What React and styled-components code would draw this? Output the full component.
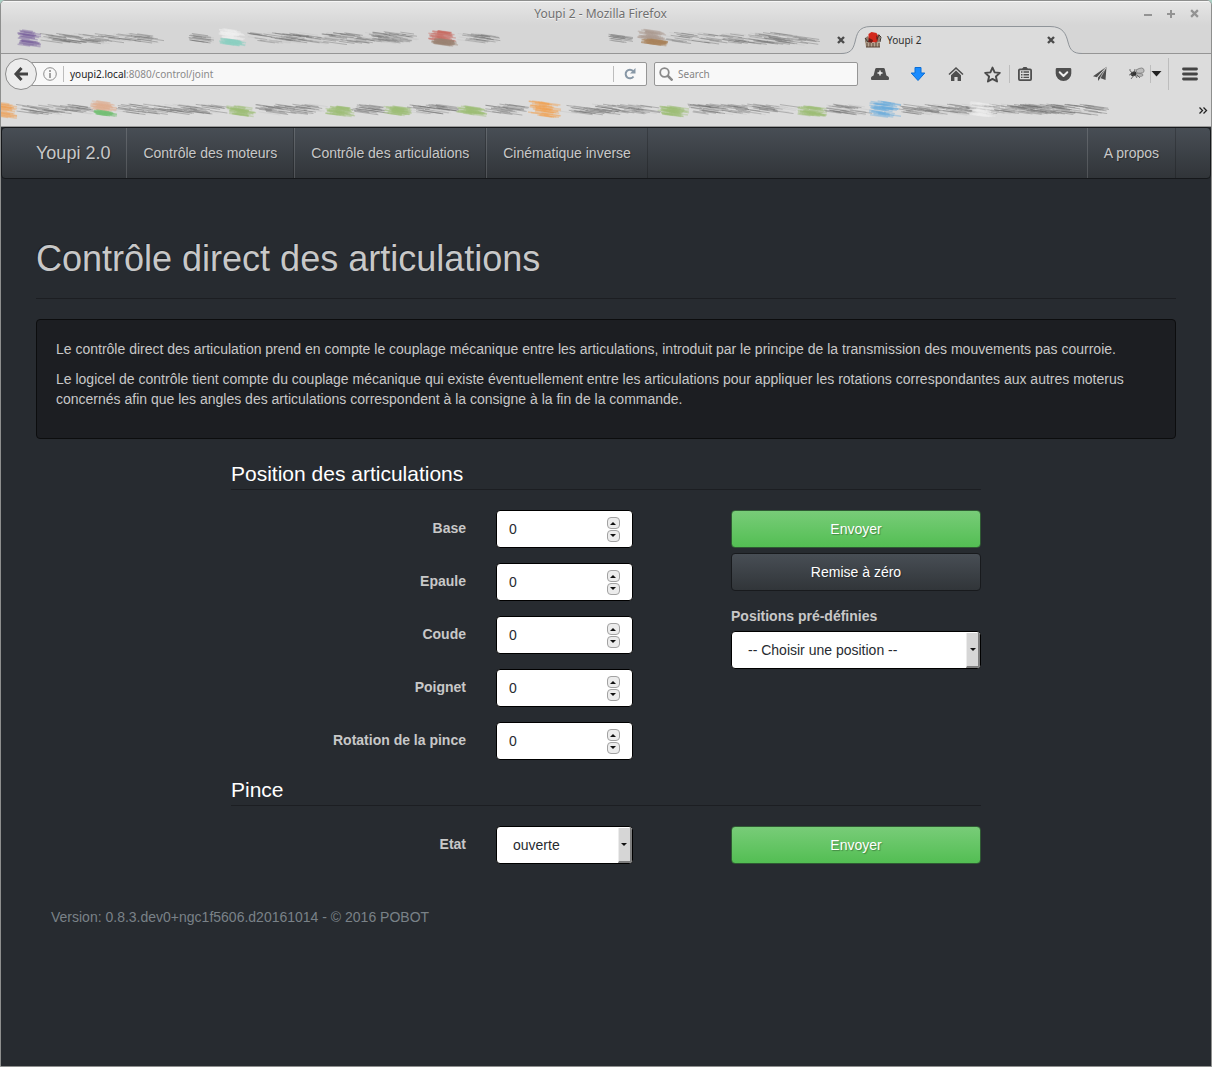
import React from "react";
import styled, { createGlobalStyle, css } from "styled-components";

const uiFont = `"Noto Sans", "Open Sans", sans-serif`;
const pageFont = `"Liberation Sans", Arial, sans-serif`;

const GlobalStyle = createGlobalStyle`
  *, *::before, *::after { box-sizing: border-box; }
  body { margin: 0; background: #a9cfc3; }
  button, input, select { font: inherit; margin: 0; }
  svg { display: block; flex: none; }
`;

/* ---------- browser window ---------- */

const Window = styled.div`
  display: flex;
  flex-direction: column;
  min-height: 100vh;
  border: 1px solid #8e8f8e;
  border-radius: 5px 5px 0 0;
  background: #dcdcdc;
  overflow: hidden;
  font-family: ${uiFont};
`;

const TopArea = styled.div`
  background: linear-gradient(#e6e6e6, #d6d6d6 24px, #d6d6d6);
  box-shadow: inset 0 1px 0 #f6f6f6;
`;

const TitleBar = styled.div`
  display: grid;
  grid-template-columns: 1fr auto 1fr;
  align-items: center;
  height: 24px;
  padding: 1px 11px 0 0;
  font-size: 12px;
  line-height: 16px;
  color: #6f6f6f;
  text-shadow: 0 1px 0 #f4f4f4;
`;

const WindowButtons = styled.div`
  grid-column: 3;
  display: flex;
  justify-content: flex-end;
  gap: 11px;
`;

const TitleText = styled.span`
  grid-column: 2;
`;

const IconButton = styled.button`
  display: flex;
  align-items: center;
  justify-content: center;
  flex: none;
  width: ${(p) => p.$w || 12}px;
  padding: 0;
  border: 0;
  background: none;
  color: ${(p) => p.$color || "#4c4c4c"};
`;

const TabStrip = styled.div`
  display: flex;
  align-items: stretch;
  height: 29px;
  box-shadow: inset 0 -1px 0 #959595;
`;

const ActiveTab = styled.div`
  position: relative;
  display: flex;
  align-items: center;
  width: 238px;
  padding: 0 28px 0 17px;
  color: #2e2e2e;
  font-size: 10px;
  line-height: 16px;
`;

const TabShape = styled.svg`
  position: absolute;
  inset: 0;
  overflow: visible;
`;

const TabLabel = styled.span`
  position: relative;
  flex: 1;
  padding-left: 5px;
`;

const Over = styled.span`
  position: relative;
`;

const Toolbar = styled.div`
  display: flex;
  align-items: center;
  height: 40px;
  padding-left: 4px;
`;

const BackButton = styled.button`
  position: relative;
  z-index: 1;
  display: flex;
  align-items: center;
  justify-content: center;
  flex: none;
  width: 32px;
  height: 32px;
  padding: 0;
  border: 1px solid #8c8c8c;
  border-radius: 50%;
  background: #ececec;
`;

const fieldBox = css`
  display: flex;
  align-items: center;
  height: 24px;
  border: 1px solid #969696;
  background: #f8f8f8;
  font-size: 10px;
  line-height: 16px;
`;

const UrlBar = styled.div`
  ${fieldBox}
  flex: 1;
  gap: 6px;
  margin-left: -6px;
  padding-left: 11px;
  border-radius: 0 2px 2px 0;
  color: #8a8a8a;
`;

const UrlText = styled.div`
  flex: 1;
  b { font-weight: 400; color: #222; }
`;

const SearchBar = styled.label`
  ${fieldBox}
  flex: 0 0 204px;
  gap: 5px;
  margin: 0 3px 0 7px;
  padding-left: 4px;
  border-radius: 2px;
`;

const SearchInput = styled.input`
  flex: 1;
  min-width: 0;
  padding: 0;
  border: 0;
  outline: 0;
  background: none;
  &::placeholder { color: #858585; opacity: 1; }
`;

const Divider = styled.span`
  flex: none;
  width: 1px;
  height: ${(p) => p.$h || 16}px;
  background: #bdbdbd;
`;

const BookmarkBar = styled.div`
  display: flex;
  align-items: flex-start;
  justify-content: space-between;
  height: 33px;
  padding: 2px 2px 0 0;
  border-bottom: 1px solid #9a9a9a;
`;

/* ---------- web page ---------- */

const Page = styled.div`
  flex: 1;
  background: #272b30;
  color: #c8c8c8;
  font-family: ${pageFont};
  font-size: 14px;
  line-height: 20px;
`;

const Container = styled.div`
  max-width: 1170px;
  margin: 0 auto;
  padding: 0 15px;
`;

const Navbar = styled.nav`
  border: 1px solid #16181b;
  border-radius: 4px;
  background: linear-gradient(#484e55, #3a3f44 60%, #313539);
  text-shadow: 1px 1px 1px rgba(0, 0, 0, 0.3);
`;

const NavRow = styled(Container)`
  display: flex;
  height: 50px;
`;

const NavBrand = styled.a`
  padding: 15px 16px 15px 0;
  color: #c8c8c8;
  font-size: 18px;
  text-decoration: none;
`;

const NavLink = styled.a`
  padding: 15px 16px;
  border-left: 1px solid rgba(255, 255, 255, 0.15);
  border-right: 1px solid rgba(0, 0, 0, 0.2);
  color: #c8c8c8;
  text-decoration: none;
`;

const Spacer = styled.span`
  flex: 1;
`;

const Heading = styled.h1`
  margin: 59px 0 20px;
  padding-bottom: 18px;
  border-bottom: 1px solid #1c1e22;
  font-size: 36px;
  font-weight: 400;
  line-height: 42px;
  text-shadow: -1px -1px 0 rgba(0, 0, 0, 0.3);
`;

const Well = styled.div`
  margin-bottom: 20px;
  padding: 19px;
  border: 1px solid #0c0d0e;
  border-radius: 4px;
  background: #1c1e22;
  p { margin: 0 0 10px; }
`;

const Form = styled.form`
  width: 750px;
  max-width: 100%;
  margin: 0 auto;
`;

const Fieldset = styled.fieldset`
  min-width: 0;
  margin: 0;
  padding: 0;
  border: 0;
`;

const Legend = styled.legend`
  width: 100%;
  margin-bottom: 20px;
  padding: 0;
  border-bottom: 1px solid #1c1e22;
  color: #fff;
  font-size: 21px;
  line-height: 30px;
`;

const Columns = styled.div`
  display: grid;
  grid-template-columns: 2fr 1fr;
`;

const Group = styled.div`
  display: grid;
  grid-template-columns: 3fr 2fr 1fr;
  margin-bottom: 15px;
`;

const FieldLabel = styled.label`
  padding: 8px 15px 0 0;
  font-weight: 700;
  text-align: right;
`;

const FieldCell = styled.div`
  min-width: 0;
  padding: 0 15px;
`;

const NumberBox = styled.div`
  display: flex;
  align-items: center;
  height: 38px;
  padding: 0 12px;
  border: 1px solid #000;
  border-radius: 4px;
  background: #fff;
`;

const NumberInput = styled.input`
  flex: 1;
  width: 0;
  min-width: 0;
  padding: 0;
  border: 0;
  outline: 0;
  background: none;
  color: #272b30;
  appearance: textfield;
  &::-webkit-inner-spin-button { appearance: none; margin: 0; }
`;

const Spinner = styled.span`
  display: grid;
  gap: 1px;
`;

const SpinButton = styled.button`
  display: flex;
  align-items: center;
  justify-content: center;
  width: 13px;
  height: 12px;
  padding: 0;
  border: 1px solid #a2a2a2;
  border-radius: 4px;
  background: #ececec;
`;

const SelectBox = styled.div`
  display: flex;
  position: relative;
  height: 38px;
  border: 1px solid #000;
  border-radius: 4px;
  background: #fff;
  overflow: hidden;
`;

const Select = styled.select`
  flex: 1;
  min-width: 0;
  padding: 0 16px;
  border: 0;
  outline: 0;
  background: none;
  color: #272b30;
  appearance: none;
`;

const SelectArrow = styled.span`
  position: absolute;
  top: 1px;
  right: 0;
  bottom: 0;
  display: flex;
  align-items: center;
  justify-content: center;
  width: 14px;
  border: solid;
  border-width: 0 2px 2px 1px;
  border-color: #ececec #7d7d7d #7d7d7d #ececec;
  background: #d6d6d6;
  pointer-events: none;
`;

const Button = styled.button`
  display: block;
  width: 100%;
  height: 38px;
  margin-bottom: 5px;
  border: 1px solid ${(p) => (p.$primary ? "#2f5a33" : "#181a1d")};
  border-radius: 4px;
  background: ${(p) =>
    p.$primary
      ? "linear-gradient(#78cc78, #62c462 60%, #53be53)"
      : "linear-gradient(#484e55, #3a3f44 60%, #313539)"};
  color: #fff;
  text-shadow: 1px 1px 1px rgba(0, 0, 0, 0.3);
`;

const StackLabel = styled.label`
  display: block;
  margin: 15px 0 5px;
  font-weight: 700;
`;

const Footer = styled.footer`
  padding: 28px 15px;
  color: #7a8288;
`;

const SmearCanvas = styled.svg`
  filter: blur(0.6px);
`;

/* ---------- drawings ---------- */

const noise = (n) => {
  const v = Math.sin(n * 127.1 + 11.7) * 43758.5453;
  return v - Math.floor(v);
};

/* Each smear is [start, end, centre, spread, colour]. */
function Smears({ width, height, items }) {
  const lines = [];
  items.forEach(([from, to, mid, spread, color], k) => {
    const gray = !color;
    const len = gray ? 20 : 17;
    const count = Math.max(10, Math.round((to - from) * (gray ? 0.7 : 1.3)));
    for (let i = 0; i < count; i++) {
      const seed = k * 997 + i * 3;
      const x = from + noise(seed) * Math.max(2, to - from - len);
      const y = mid - 1 + (noise(seed + 1) - 0.5) * spread;
      const l = Math.min(to - x, len * (0.6 + noise(seed + 2) * 0.6));
      lines.push(
        <line
          key={`${k}-${i}`}
          x1={x}
          y1={y}
          x2={x + l}
          y2={y + l * 0.14}
          stroke={color || (i % 3 ? "#6c6c6c" : "#c4c4c4")}
          strokeWidth={gray ? 0.9 : 1.5}
          opacity={gray ? 0.45 : 0.4}
        />
      );
    }
  });
  return (
    <SmearCanvas width={width} height={height} aria-hidden="true">
      {lines}
    </SmearCanvas>
  );
}

const tabSmears = [
  [16, 40, 13, 15, "#79619c"],
  [37, 163, 13, 8],
  [187, 213, 13, 7],
  [217, 244, 9, 9, "#eeeeee"],
  [218, 245, 17, 5, "#8ccfc1"],
  [245, 400, 13, 9],
  [370, 423, 12, 9],
  [427, 455, 11, 9, "#c76b62"],
  [430, 457, 17, 5, "#9a8272"],
  [455, 500, 13, 8],
  [607, 632, 13, 7],
  [636, 665, 11, 11, "#ab9a90"],
  [640, 667, 17, 4, "#a9835c"],
  [663, 820, 13, 10],
];

const bookmarkSmears = [
  [-6, 16, 14, 14, "#eda057"],
  [14, 95, 13, 8],
  [88, 116, 10, 8, "#deae91"],
  [92, 116, 17, 4, "#76bf76"],
  [113, 230, 13, 8],
  [225, 255, 15, 8, "#9dbd76"],
  [252, 330, 13, 8],
  [324, 354, 15, 8, "#9dbd76"],
  [350, 388, 13, 8],
  [382, 411, 15, 8, "#9dbd76"],
  [405, 458, 13, 8],
  [455, 486, 15, 8, "#9dbd76"],
  [483, 528, 13, 8],
  [527, 560, 13, 15, "#f0a152"],
  [557, 660, 13, 8],
  [656, 688, 15, 8, "#9dbd76"],
  [686, 800, 13, 8],
  [796, 826, 15, 8, "#9dbd76"],
  [823, 872, 13, 8],
  [868, 900, 13, 14, "#67aadb"],
  [897, 1075, 13, 8],
  [968, 995, 13, 13, "#eeeeee"],
  [990, 1108, 13, 8],
];

const Cross = ({ size = 8, w = 2 }) => (
  <svg width={size} height={size} viewBox="0 0 8 8">
    <path d="M1 1l6 6M7 1L1 7" stroke="currentColor" strokeWidth={w} />
  </svg>
);

const Caret = ({ up }) => (
  <svg width="6" height="4" viewBox="0 0 6 4">
    <path d={up ? "M0 4L3 1l3 3z" : "M0 0h6L3 3z"} fill="#111" />
  </svg>
);

const RobotIcon = () => (
  <svg width="18" height="16" viewBox="0 0 18 16">
    <path d="M1 6l3-2 2 4-1 3H1zM12 5l2-3 2 1v6l-3 2z" fill="#8d7d6d" />
    <path d="M4.500 2l3-2 5 1 2 4-2 6-5-1-3-3z" fill="#d2281c" />
    <path d="M5 6l4 2-1 3-4-1zM12 3l2 3-1 4" fill="#6f1a14" />
    <path d="M1 6l3 4M13 7l2-4 2 2-1 5" stroke="#403832" fill="none" />
    <path d="M1 10l5 1 10-1v5H2z" fill="#b7a491" />
    <path d="M3 11v4M6 10v5M9 11v4M12 10v5M15 11v4M2 15h14" stroke="#5a4436" />
  </svg>
);

const BackIcon = () => (
  <svg width="16" height="16" viewBox="0 0 16 16" fill="none" stroke="#444" strokeWidth="3">
    <path d="M8.500 2L3 8l5.500 6M3 8h12" />
  </svg>
);

const InfoIcon = () => (
  <svg width="14" height="14" viewBox="0 0 14 14">
    <circle cx="7" cy="7" r="6.300" fill="none" stroke="#8d8d8d" />
    <path d="M7 6v5M7 3v2" stroke="#8d8d8d" strokeWidth="1.600" />
  </svg>
);

const ReloadIcon = () => (
  <svg width="14" height="14" viewBox="0 0 14 14">
    <path d="M10.500 9.500A4.300 4.300 0 1 1 10 4" fill="none" stroke="#8797a6" strokeWidth="2" />
    <path d="M12.500 1v5.500H7z" fill="#8797a6" />
  </svg>
);

const SearchIcon = () => (
  <svg width="14" height="14" viewBox="0 0 14 14" fill="none" stroke="#8a8a8a">
    <circle cx="5.500" cy="5.500" r="4.300" strokeWidth="1.800" />
    <path d="M8.500 8.500l5 5" strokeWidth="2.500" />
  </svg>
);

const HatIcon = () => (
  <svg width="18" height="14" viewBox="0 0 18 14">
    <path d="M4.200 2Q4.500 1 5.500 1h7q1 0 1.300 1l1.600 6.500 1.800 1q.8.600.8 1.500v1q0 1-1 1H1q-1 0-1-1v-1q0-.9.800-1.500l1.800-1z" fill="#4f4f4f" />
    <path d="M9 3.500v5M6.500 6h5" stroke="#f4f4f4" strokeWidth="1.400" />
  </svg>
);

const DownloadIcon = () => (
  <svg width="16" height="16" viewBox="0 0 16 16">
    <path d="M5 1.500h6V7h3.800L8 14.500 1.200 7H5z" fill="#1a8cff" stroke="#0a6ed6" strokeLinejoin="round" />
  </svg>
);

const HomeIcon = () => (
  <svg width="16" height="16" viewBox="0 0 16 16">
    <path d="M1 8.500l7-6.500 7 6.500" fill="none" stroke="#4f4f4f" strokeWidth="1.600" />
    <path d="M3 9.200l5-4.600 5 4.600V15H9.600v-4H6.400v4H3z" fill="#4f4f4f" />
  </svg>
);

const StarIcon = () => (
  <svg width="17" height="17" viewBox="0 0 16 16">
    <path d="M8 1.500l2 4.500 4.900.5-3.700 3.300 1.100 4.800L8 12.100l-4.300 2.500 1.100-4.800L1.100 6.500 6 6z" fill="none" stroke="#4a4a4a" strokeWidth="1.800" strokeLinejoin="round" />
  </svg>
);

const ListIcon = () => (
  <svg width="16" height="16" viewBox="0 0 16 16">
    <path d="M5 3l1.500-2h3L11 3" fill="#4f4f4f" />
    <rect x="1.900" y="3.400" width="12.200" height="10.700" rx="1" fill="none" stroke="#4f4f4f" strokeWidth="1.800" />
    <path d="M4 6h1.500M4 8.700h1.500M4 11.400h1.500M6.500 6H12M6.500 8.700H12M6.500 11.400H12" stroke="#4f4f4f" strokeWidth="1.400" />
  </svg>
);

const PocketIcon = () => (
  <svg width="17" height="15" viewBox="0 0 17 15">
    <path d="M2 1h13q1.300 0 1.300 1.300V6.500a7.800 7.500 0 0 1-15.600 0V2.300Q.7 1 2 1z" fill="#4f4f4f" />
    <path d="M4.700 5.300L8.500 9l3.800-3.700" fill="none" stroke="#eee" strokeWidth="2" strokeLinecap="round" strokeLinejoin="round" />
  </svg>
);

const PlaneIcon = () => (
  <svg width="16" height="16" viewBox="0 0 16 16">
    <path d="M14.500.8L1 10.300l4 .9zM14.500.8L6 11.500V15l2.300-3 5.200 2z" fill="#4f4f4f" />
    <path d="M14 1.500L5.500 11.200v3.500M8.300 12L14 1.500" stroke="#dcdcdc" strokeWidth=".7" fill="none" />
  </svg>
);

const FlyIcon = () => (
  <svg width="53" height="18" viewBox="0 0 53 18">
    <path d="M21 5q7-4 8 0t-7 3zM20 9q8-1 8 1t-7 1z" fill="#bcbcbc" stroke="#777" strokeWidth=".8" />
    <ellipse cx="18.500" cy="9" rx="3" ry="2.300" fill="#333" transform="rotate(-20 18 9)" />
    <path d="M15 6l3 2M14 10l4-1M16 14l3-4M22 13l-2-3M25 13l-3-3M20 4l-1 4M14 5h2" stroke="#555" strokeWidth=".8" />
    <path d="M35.500 0v18" stroke="#bdbdbd" />
    <path d="M36.500 6h10l-5 5.500z" fill="#222" />
  </svg>
);

const MenuIcon = () => (
  <svg width="16" height="14" viewBox="0 0 16 14">
    <path d="M1.500 2h13M1.500 7h13M1.500 12h13" stroke="#444" strokeWidth="2.800" strokeLinecap="round" />
  </svg>
);

/* ---------- composed parts ---------- */

const joints = [
  ["base", "Base"],
  ["epaule", "Epaule"],
  ["coude", "Coude"],
  ["poignet", "Poignet"],
  ["rotation", "Rotation de la pince"],
];

function NumberField({ id, label }) {
  return (
    <Group>
      <FieldLabel htmlFor={id}>{label}</FieldLabel>
      <FieldCell>
        <NumberBox>
          <NumberInput id={id} type="number" defaultValue="0" />
          <Spinner>
            <SpinButton type="button" aria-label={`${label} +`}><Caret up /></SpinButton>
            <SpinButton type="button" aria-label={`${label} -`}><Caret /></SpinButton>
          </Spinner>
        </NumberBox>
      </FieldCell>
    </Group>
  );
}

function SelectField({ id, options }) {
  return (
    <SelectBox>
      <Select id={id}>
        {options.map((o) => <option key={o}>{o}</option>)}
      </Select>
      <SelectArrow><Caret /></SelectArrow>
    </SelectBox>
  );
}

function BrowserChrome() {
  return (
    <>
      <TopArea>
        <TitleBar>
          <TitleText>Youpi 2 - Mozilla Firefox</TitleText>
          <WindowButtons>
            <IconButton $color="#939393" aria-label="Minimize">
              <svg width="8" height="8"><path d="M0 5h8" stroke="currentColor" strokeWidth="2" /></svg>
            </IconButton>
            <IconButton $color="#939393" aria-label="Maximize">
              <svg width="8" height="8"><path d="M0 4h8M4 0v8" stroke="currentColor" strokeWidth="2" /></svg>
            </IconButton>
            <IconButton $color="#939393" aria-label="Close"><Cross size={9} /></IconButton>
          </WindowButtons>
        </TitleBar>
        <TabStrip>
          <Smears width={834} height={28} items={tabSmears} />
          <IconButton aria-label="Close tab"><Cross w={2.4} /></IconButton>
          <ActiveTab>
            <TabShape width="238" height="29" viewBox="0 0 238 29" aria-hidden="true">
              <path d="M-6 29v-.5C3 28.500 6 25 8 17S11 1.500 24 1.500h179C216 1.500 219 9 221 17s5 11.500 14 11.500v.5z" fill="#dcdcdc" />
              <path d="M-6 28.500C3 28.500 6 25 8 17S11 1.500 24 1.500h179C216 1.500 219 9 221 17s5 11.500 14 11.500" fill="none" stroke="#8f9499" />
            </TabShape>
            <Over><RobotIcon /></Over>
            <TabLabel>Youpi 2</TabLabel>
            <Over><IconButton aria-label="Close tab"><Cross w={2.4} /></IconButton></Over>
          </ActiveTab>
        </TabStrip>
      </TopArea>
      <Toolbar>
        <BackButton aria-label="Back"><BackIcon /></BackButton>
        <UrlBar>
          <InfoIcon />
          <Divider />
          <UrlText><b>youpi2.local</b>:8080/control/joint</UrlText>
          <Divider />
          <IconButton $w={20} aria-label="Reload"><ReloadIcon /></IconButton>
          <span />
        </UrlBar>
        <SearchBar>
          <SearchIcon />
          <SearchInput type="text" placeholder="Search" aria-label="Search" />
        </SearchBar>
        <IconButton $w={38} aria-label="Private"><HatIcon /></IconButton>
        <IconButton $w={38} aria-label="Downloads"><DownloadIcon /></IconButton>
        <IconButton $w={38} aria-label="Home"><HomeIcon /></IconButton>
        <IconButton $w={34} aria-label="Bookmark"><StarIcon /></IconButton>
        <Divider $h={18} />
        <IconButton $w={30} aria-label="Bookmarks list"><ListIcon /></IconButton>
        <IconButton $w={46} aria-label="Pocket"><PocketIcon /></IconButton>
        <IconButton $w={28} aria-label="Send"><PlaneIcon /></IconButton>
        <IconButton $w={54} aria-label="Firebug"><FlyIcon /></IconButton>
        <Divider $h={32} />
        <IconButton $w={42} aria-label="Menu"><MenuIcon /></IconButton>
      </Toolbar>
      <BookmarkBar>
        <Smears width={1120} height={28} items={bookmarkSmears} />
        <IconButton aria-label="More bookmarks">
          <svg width="10" height="28" fill="none" stroke="#222" strokeWidth="1.300">
            <path d="M1.500 11.500l3 3-3 3M5.500 11.500l3 3-3 3" />
          </svg>
        </IconButton>
      </BookmarkBar>
    </>
  );
}

export default function App() {
  return (
    <Window>
      <GlobalStyle />
      <BrowserChrome />
      <Page>
        <Navbar>
          <NavRow>
            <NavBrand href="#">Youpi 2.0</NavBrand>
            <NavLink href="#">Contrôle des moteurs</NavLink>
            <NavLink href="#">Contrôle des articulations</NavLink>
            <NavLink href="#">Cinématique inverse</NavLink>
            <Spacer />
            <NavLink href="#">A propos</NavLink>
          </NavRow>
        </Navbar>
        <Container as="main">
          <Heading>Contrôle direct des articulations</Heading>
          <Well>
            <p>
              Le contrôle direct des articulation prend en compte le couplage mécanique entre les
              articulations, introduit par le principe de la transmission des mouvements pas courroie.
            </p>
            <p>
              Le logicel de contrôle tient compte du couplage mécanique qui existe éventuellement entre
              les articulations pour appliquer les rotations correspondantes aux autres moterus concernés
              afin que les angles des articulations correspondent à la consigne à la fin de la commande.
            </p>
          </Well>
          <Form onSubmit={(e) => e.preventDefault()}>
            <Fieldset>
              <Legend>Position des articulations</Legend>
              <Columns>
                <div>
                  {joints.map(([id, label]) => <NumberField key={id} id={id} label={label} />)}
                </div>
                <div>
                  <Button $primary>Envoyer</Button>
                  <Button type="button">Remise à zéro</Button>
                  <StackLabel htmlFor="preset">Positions pré-définies</StackLabel>
                  <SelectField id="preset" options={["-- Choisir une position --"]} />
                </div>
              </Columns>
            </Fieldset>
            <Fieldset>
              <Legend>Pince</Legend>
              <Columns>
                <Group>
                  <FieldLabel htmlFor="etat">Etat</FieldLabel>
                  <FieldCell><SelectField id="etat" options={["ouverte", "fermée"]} /></FieldCell>
                </Group>
                <div><Button $primary>Envoyer</Button></div>
              </Columns>
            </Fieldset>
          </Form>
          <Footer>Version: 0.8.3.dev0+ngc1f5606.d20161014 - © 2016 POBOT</Footer>
        </Container>
      </Page>
    </Window>
  );
}
